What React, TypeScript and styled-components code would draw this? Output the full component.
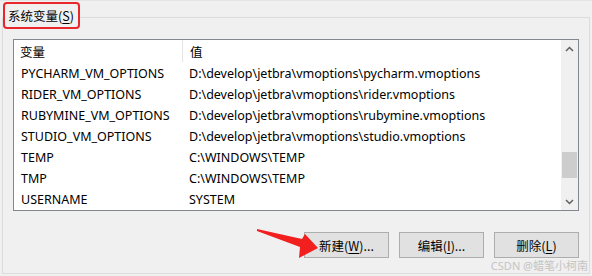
import React from 'react'
import styled, { createGlobalStyle } from 'styled-components'

const GlobalStyle = createGlobalStyle`
    html, body {
        margin: 0;
        padding: 0;
        background: #f0f0f0;
    }
    body {
        font-family: "Noto Sans", "Noto Sans CJK SC", sans-serif;
        font-size: 12px;
        color: #000;
    }
`

const Page = styled.div`
    position: relative;
    width: 592px;
    height: 276px;
    overflow: hidden;
    background: #f0f0f0;
    border-top: 1px solid #e4e4e4;
    box-sizing: border-box;
    padding: 16px 2px 0 2px;
`

const GroupBox = styled.div`
    position: relative;
    box-sizing: border-box;
    width: 588px;
    height: 257px;
    border: 1px solid #dcdcdc;
    padding: 21px 10px 0 10px;
`

const Caption = styled.div`
    position: absolute;
    left: 0;
    top: -16px;
    height: 23px;
    padding: 0 4px 0 3px;
    display: flex;
    align-items: center;
    background: #f0f0f0;
    border: 2px solid #e8262b;
    border-radius: 4px;
    font-family: "Noto Sans CJK SC", sans-serif;
    font-size: 12.5px;
`

const Key = styled.span`
    text-decoration: underline;
    text-underline-offset: 2px;
`

const ListBox = styled.div`
    box-sizing: border-box;
    width: 566px;
    height: 172px;
    border: 1px solid #828790;
    background: #fff;
    display: flex;
`

const Table = styled.div`
    flex: 1;
    display: flex;
    flex-direction: column;
`

const HeaderRow = styled.div`
    height: 22px;
    display: grid;
    grid-template-columns: 169px 1fr;
`

const HeaderCell = styled.div<{ $sep?: boolean }>`
    display: flex;
    align-items: center;
    padding-left: ${(p) => (p.$sep ? '6px' : '7px')};
    border-right: ${(p) => (p.$sep ? '1px solid #e5e5e5' : 'none')};
    font-family: "Noto Sans CJK SC", sans-serif;
    font-size: 12.5px;
`

const Row = styled.div`
    height: 21px;
    display: grid;
    grid-template-columns: 169px 1fr;
    align-items: center;
    white-space: nowrap;
`

const Cell = styled.div<{ $first?: boolean }>`
    padding-left: ${(p) => (p.$first ? '7px' : '6px')};
    padding-top: 1px;
    font-size: 12.5px;
`

const ScrollBar = styled.div`
    width: 17px;
    display: flex;
    flex-direction: column;
    background: #f0f0f0;
`

const Arrow = styled.div`
    height: 17px;
    display: flex;
    align-items: center;
    justify-content: center;
`

const Track = styled.div`
    flex: 1;
    display: flex;
    flex-direction: column;
    padding: 95px 1px 0 1px;
`

const Thumb = styled.div`
    height: 26px;
    background: #cdcdcd;
`

const Buttons = styled.div`
    display: flex;
    justify-content: flex-end;
    gap: 10px;
    margin-top: 21px;
`

const Button = styled.button`
    box-sizing: border-box;
    width: 85px;
    height: 26px;
    margin: 0;
    padding: 0;
    background: #e1e1e1;
    border: 1px solid #adadad;
    font-family: "Noto Sans CJK SC", sans-serif;
    font-size: 12.5px;
    color: #000;
`

const Overlay = styled.svg`
    position: absolute;
    left: 0;
    top: 0;
    pointer-events: none;
`

const Watermark = styled.div`
    position: absolute;
    right: 4px;
    bottom: 3px;
    font-family: "Noto Sans", "Noto Sans CJK SC", sans-serif;
    font-size: 11px;
    color: #c4c4c4;
`

const rows: [string, string][] = [
    ['PYCHARM_VM_OPTIONS', 'D:\\develop\\jetbra\\vmoptions\\pycharm.vmoptions'],
    ['RIDER_VM_OPTIONS', 'D:\\develop\\jetbra\\vmoptions\\rider.vmoptions'],
    ['RUBYMINE_VM_OPTIONS', 'D:\\develop\\jetbra\\vmoptions\\rubymine.vmoptions'],
    ['STUDIO_VM_OPTIONS', 'D:\\develop\\jetbra\\vmoptions\\studio.vmoptions'],
    ['TEMP', 'C:\\WINDOWS\\TEMP'],
    ['TMP', 'C:\\WINDOWS\\TEMP'],
    ['USERNAME', 'SYSTEM'],
]

function Chevron({ down }: { down?: boolean }): React.ReactElement {
    return (
        <svg width="9" height="6" viewBox="0 0 9 6">
            <path
                d={down ? 'M1 1 L4.5 4.5 L8 1' : 'M1 5 L4.5 1.5 L8 5'}
                fill="none"
                stroke="#606060"
                strokeWidth="1.5"
            />
        </svg>
    )
}

export default function App(): React.ReactElement {
    return (
        <Page>
            <GlobalStyle />
            <GroupBox>
                <Caption>
                    系统变量(<Key>S</Key>)
                </Caption>
                <ListBox>
                    <Table>
                        <HeaderRow>
                            <HeaderCell $sep>变量</HeaderCell>
                            <HeaderCell>值</HeaderCell>
                        </HeaderRow>
                        {rows.map(([k, v]) => (
                            <Row key={k}>
                                <Cell $first>{k}</Cell>
                                <Cell>{v}</Cell>
                            </Row>
                        ))}
                    </Table>
                    <ScrollBar>
                        <Arrow>
                            <Chevron />
                        </Arrow>
                        <Track>
                            <Thumb />
                        </Track>
                        <Arrow>
                            <Chevron down />
                        </Arrow>
                    </ScrollBar>
                </ListBox>
                <Buttons>
                    <Button>
                        新建(<Key>W</Key>)...
                    </Button>
                    <Button>
                        编辑(<Key>I</Key>)...
                    </Button>
                    <Button>
                        删除(<Key>L</Key>)
                    </Button>
                </Buttons>
            </GroupBox>
            <Overlay width="592" height="276" viewBox="0 0 592 276">
                <polygon
                    points="257,228 302,238 305,233 318,247 299,257 300,246 257,230"
                    fill="#f21f1f"
                />
            </Overlay>
            <Watermark>CSDN @蜡笔小柯南</Watermark>
        </Page>
    )
}
